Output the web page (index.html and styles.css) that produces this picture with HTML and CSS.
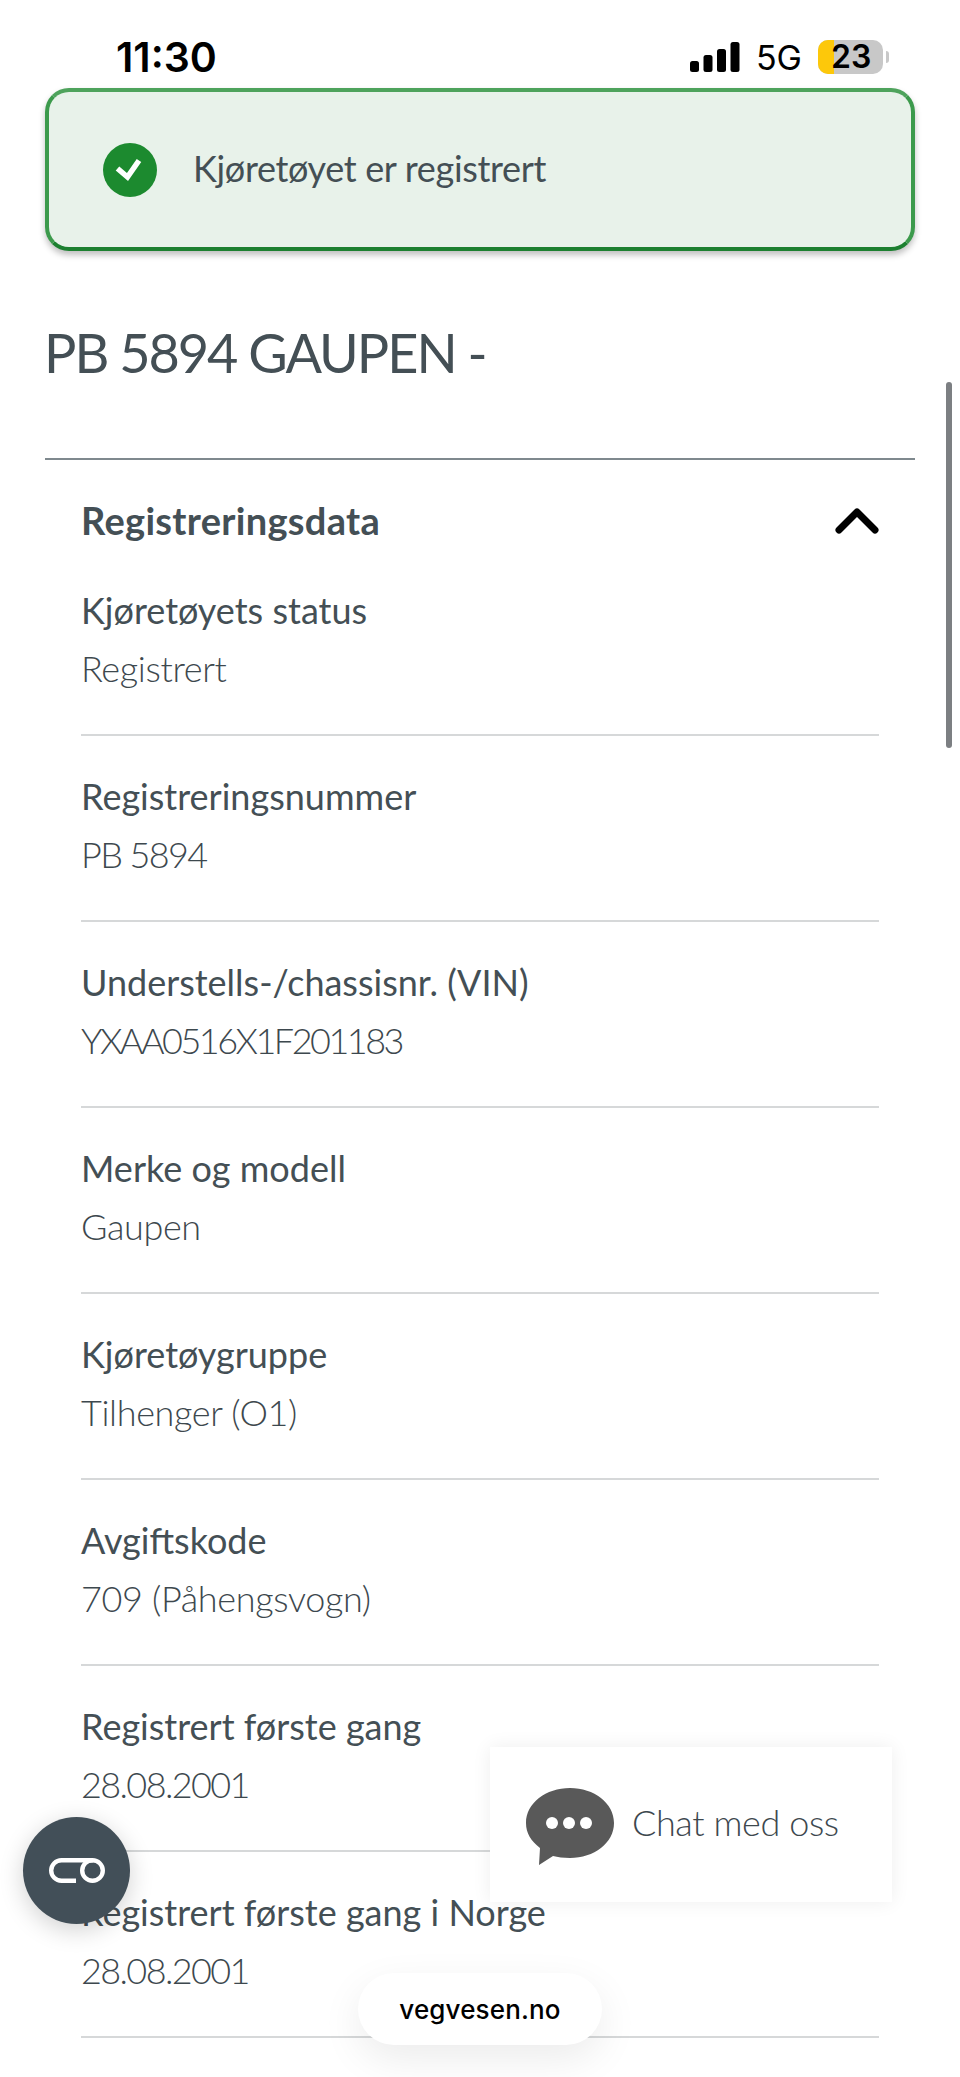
FILE: index.html
```html
<!DOCTYPE html>
<html>
<head>
<title>PB 5894 GAUPEN</title>
<link rel="stylesheet" href="styles.css">
</head>
<body>
  <div class="status">
    <span class="clock">11:30</span>
    <span class="status_right">
      <svg class="signal" width="50" height="30" viewBox="0 0 50 30">
        <rect x="0" y="19" width="9" height="11" rx="2.5"/>
        <rect x="13.5" y="13" width="9" height="17" rx="2.5"/>
        <rect x="27" y="7" width="9" height="23" rx="2.5"/>
        <rect x="40.5" y="0" width="9" height="30" rx="2.5"/>
      </svg>
      <span class="net">5G</span>
      <span class="battery"><span class="battery_fill"></span><span class="battery_num">23</span></span>
      <span class="battery_cap"></span>
    </span>
  </div>
  <div class="banner">
    <svg class="banner_icon" width="54" height="54" viewBox="0 0 54 54">
      <circle cx="27" cy="27" r="27" fill="#1c8a2f"/>
      <path d="M14.5 25.5 L24.5 34 L36 17.5" fill="none" stroke="#fff" stroke-width="5.5"/>
    </svg>
    <span class="banner_text">Kjøretøyet er registrert</span>
  </div>
  <h1>PB 5894 GAUPEN -</h1>
  <div class="section">
    <div class="section_head">
      <span>Registreringsdata</span>
      <svg width="44" height="28" viewBox="0 0 44 28">
        <path d="M4 24 L22 6 L40 24" fill="none" stroke="#000" stroke-width="7" stroke-linecap="round" stroke-linejoin="round"/>
      </svg>
    </div>
    <div class="row first"><div class="label">Kjøretøyets status</div><div class="value">Registrert</div></div>
    <div class="row"><div class="label">Registreringsnummer</div><div class="value tight">PB 5894</div></div>
    <div class="row"><div class="label">Understells-/chassisnr. (VIN)</div><div class="value tighter">YXAA0516X1F201183</div></div>
    <div class="row"><div class="label">Merke og modell</div><div class="value">Gaupen</div></div>
    <div class="row"><div class="label">Kjøretøygruppe</div><div class="value">Tilhenger (O1)</div></div>
    <div class="row"><div class="label">Avgiftskode</div><div class="value">709 (Påhengsvogn)</div></div>
    <div class="row"><div class="label">Registrert første gang</div><div class="value tight">28.08.2001</div></div>
    <div class="row"><div class="label">Registrert første gang i Norge</div><div class="value tight">28.08.2001</div></div>
  </div>
  <div class="scrollbar"></div>
  <div class="chat">
    <svg width="90" height="78" viewBox="0 0 90 78">
      <path d="M45 0 C69 0 89 15 89 35 C89 55 69 70 45 70 C38 70 33 69 28 68 L14 77 L15 60 C6 53 1 45 1 35 C1 15 21 0 45 0 Z" fill="#595959"/>
      <circle cx="27" cy="35" r="6" fill="#fff"/>
      <circle cx="44" cy="35" r="6" fill="#fff"/>
      <circle cx="61" cy="35" r="6" fill="#fff"/>
    </svg>
    <span class="chat_text">Chat med oss</span>
  </div>
  <div class="access">
    <svg width="56" height="25" viewBox="0 0 56 25">
      <path d="M44 2.2 H12.5 A10.3 10.3 0 0 0 12.5 22.8 H27" fill="none" stroke="#fff" stroke-width="4.4"/>
      <circle cx="43.5" cy="12.5" r="10.3" fill="none" stroke="#fff" stroke-width="4.4"/>
    </svg>
  </div>
  <div class="url">vegvesen.no</div>
</body>
</html>
```
FILE: styles.css
```css
html, body {
  margin: 0;
  height: 2077px;
  overflow: hidden;
}
body {
  position: relative;
  background-color: #fff;
  color: #444f55;
  font-family: "Lato", sans-serif;
}
.status {
  display: flex;
  justify-content: space-between;
  align-items: center;
  height: 88px;
  padding: 0 71px 0 116px;
  box-sizing: border-box;
  color: #000;
  font-family: "Inter", sans-serif;
}
.clock {
  font-size: 41px;
  font-weight: 600;
  padding-top: 26px;
}
.status_right {
  display: flex;
  align-items: center;
  padding-top: 26px;
}
.net {
  font-size: 34px;
  margin-left: 16px;
}
.battery {
  position: relative;
  display: block;
  width: 65px;
  height: 34px;
  margin-left: 16px;
  background-color: #c8c8c8;
  border-radius: 10px;
}
.battery_fill {
  display: block;
  width: 16px;
  height: 100%;
  background-color: #fdc80a;
  border-radius: 10px 0 0 10px;
}
.battery_num {
  position: absolute;
  top: 0;
  left: 13px;
  font-size: 32px;
  font-weight: 600;
  line-height: 34px;
}
.battery_cap {
  width: 3px;
  height: 12px;
  margin-left: 3px;
  background-color: #c8c8c8;
  border-radius: 0 3px 3px 0;
}
.banner {
  display: flex;
  align-items: center;
  gap: 36px;
  height: 163px;
  margin: 0 45px;
  padding: 0 54px;
  box-sizing: border-box;
  background-color: #e8f2ea;
  border: 4px solid;
  border-color: #4ea35c #3c9a4c #1c8030;
  border-radius: 24px;
  box-shadow: 0 4px 6px rgba(0, 0, 0, 0.25);
  font-size: 36px;
  letter-spacing: -0.33px;
}
.banner_icon {
  flex: none;
}
.banner_text {
  margin-bottom: 3px;
}
h1 {
  margin: 65px 45px 0 44px;
  font-size: 54px;
  font-weight: 400;
  line-height: 74px;
  letter-spacing: -2px;
}
.section {
  margin: 68px 45px 0;
  border-top: 2px solid #7f898e;
}
.section_head {
  display: flex;
  justify-content: space-between;
  align-items: center;
  padding: 33px 36px 0;
  font-size: 38px;
  font-weight: 700;
  line-height: 54px;
  letter-spacing: 0.3px;
}
.row {
  margin: 0 36px;
  padding: 32px 0 44px;
  height: 186px;
  box-sizing: border-box;
  border-bottom: 2px solid #d6d8d9;
}
.row.first {
  height: 189px;
  padding-top: 35px;
}
.label {
  font-size: 36px;
  line-height: 56px;
}
.value {
  color: #3d484e;
  font-size: 36px;
  font-weight: 300;
  line-height: 60px;
  letter-spacing: -0.35px;
}
.tight {
  letter-spacing: -1.6px;
}
.tighter {
  letter-spacing: -2.5px;
}
.scrollbar {
  position: absolute;
  top: 382px;
  left: 946px;
  width: 6px;
  height: 366px;
  background-color: #7c7f82;
  border-radius: 3px;
}
.chat {
  position: absolute;
  top: 1747px;
  left: 490px;
  width: 402px;
  height: 155px;
  display: flex;
  align-items: center;
  gap: 17px;
  padding-left: 35px;
  box-sizing: border-box;
  background-color: #fff;
  box-shadow: 0 0 18px rgba(0, 0, 0, 0.07);
  color: #3d484e;
  font-size: 36px;
  font-weight: 300;
}
.chat svg {
  margin-top: 5px;
}
.chat_text {
  margin-bottom: 6px;
  letter-spacing: -0.4px;
}
.access {
  position: absolute;
  top: 1817px;
  left: 23px;
  width: 107px;
  height: 107px;
  display: flex;
  align-items: center;
  justify-content: center;
  background-color: #424f58;
  border-radius: 50%;
  box-shadow: 0 6px 24px rgba(0, 0, 0, 0.18);
}
.url {
  position: absolute;
  top: 1973px;
  left: 358px;
  width: 244px;
  height: 72px;
  display: flex;
  align-items: center;
  justify-content: center;
  background-color: #fff;
  border-radius: 36px;
  box-shadow: 0 14px 40px rgba(0, 0, 0, 0.08);
  color: #000;
  font-family: "Inter", sans-serif;
  font-size: 26px;
  font-weight: 500;
  letter-spacing: 0.15px;
}
```
